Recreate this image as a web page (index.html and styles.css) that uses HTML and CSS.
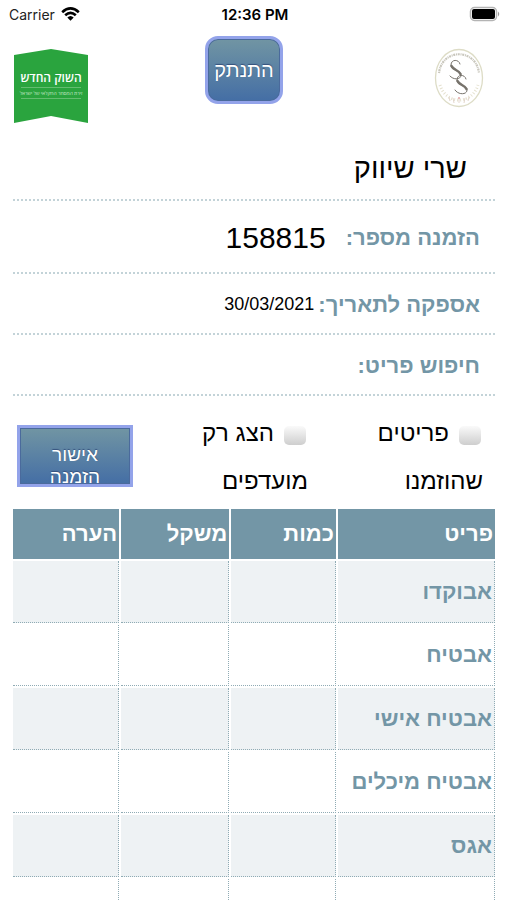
FILE: index.html
```html
<!DOCTYPE html>
<html lang="he" dir="rtl">
<head>
<meta charset="utf-8">
<meta name="viewport" content="width=device-width, initial-scale=1">
<title>הזמנה 158815</title>
<link rel="stylesheet" href="styles.css">
</head>
<body>
<div class="status" dir="ltr">
  <div class="carrier"><span>Carrier</span>
    <svg width="19" height="14" viewBox="0 0 19 14" aria-hidden="true"><g fill="none" stroke="#000" stroke-width="2.6"><path d="M1.2 5.2Q9.500-2.400 17.800 5.200"/><path d="M4.200 8.300Q9.500 3.300 14.800 8.300"/></g><path d="M6.300 10.500Q9.500 7.500 12.700 10.500L9.500 13.800Z"/></svg>
  </div>
  <time class="clock">12:36 PM</time>
  <div class="battery"><svg width="32" height="16" viewBox="0 0 32 16" aria-hidden="true"><rect x="1.500" y="1.500" width="26" height="13" rx="4" fill="#fff" stroke="#b4b4b4" stroke-width="1.500"/><rect x="3" y="3" width="23" height="10" rx="2"/><path d="M29 5.500Q31.500 8 29 10.500Z" fill="#999"/></svg></div>
</div>
<header class="header">
  <svg class="seal" width="50" height="60" viewBox="0 0 50 60" role="img" aria-label="SS">
    <ellipse cx="25" cy="30" rx="23.500" ry="28.500" fill="none" stroke="#dddcc6" stroke-width="1.300"/>
    <path d="M5 25C8 0 42 0 45 25" fill="none" stroke="#c9c7bd" stroke-width="2.200" stroke-dasharray="1 .7 2 .8"/>
    <path d="M6 37C12 57 38 57 44 37" fill="none" stroke="#e5e1cf" stroke-width="3" stroke-dasharray="1 2"/>
    <path d="M15 49l1 4M19 50l1 5M25 50v5M31 50l-1 5M35 49l-1 4" stroke="#e3d6cc" stroke-width="1"/>
    <circle cx="25" cy="50" r="1" fill="#e3a8a8"/>
    <g fill="none" stroke="#77736c" stroke-linecap="round">
      <path d="M26 16C25 11 17 11 17 17C17 23 27 22 27 27C27 32 19 32 16 28" stroke-width="1"/>
      <path d="M17.500 18C19 22 25 22 26.500 26" stroke-width="2.500"/>
      <path d="M32 31C31 26 23 26 23 32C23 38 33 37 33 42C33 47 24 47 21 42" stroke-width="1"/>
      <path d="M23.500 33C25 37 31 37 32.500 41" stroke-width="2.500"/>
    </g>
  </svg>
  <button class="logout" type="button">התנתק</button>
  <svg class="market" width="74" height="74" viewBox="0 0 74 74" role="img" aria-label="השוק החדש">
    <path d="M0 6L37 0L74 6V74L37 67L0 74Z" fill="#2aa43e"/>
    <text class="market-name" x="37" y="33">השוק החדש</text>
    <path d="M7 38.500H67M7 49.500H67" stroke="#73c47e" stroke-width=".8"/>
    <text class="market-tag" x="37" y="46">זירת המסחר החקלאי של ישראל</text>
  </svg>
</header>
<main>
  <section class="details">
    <h1 class="customer">שרי שיווק</h1>
    <div class="line order"><span class="label">הזמנה מספר:</span><span class="number">158815</span></div>
    <div class="line"><span class="label">אספקה לתאריך:</span><span class="date">30/03/2021</span></div>
    <div class="line"><label class="label" for="search">חיפוש פריט:</label><input class="search" id="search" type="text"></div>
  </section>
  <div class="filters">
    <label class="filter"><input type="checkbox">פריטים שהוזמנו</label>
    <label class="filter"><input type="checkbox">הצג רק מועדפים</label>
    <button class="confirm" type="button"><span>אישור הזמנה</span></button>
  </div>
  <table class="items">
    <colgroup><col class="item"><col class="amount"><col class="weight"><col class="note"></colgroup>
    <thead><tr><th>פריט</th><th>כמות</th><th>משקל</th><th>הערה</th></tr></thead>
    <tbody>
      <tr><td>אבוקדו</td><td></td><td></td><td></td></tr>
      <tr><td>אבטיח</td><td></td><td></td><td></td></tr>
      <tr><td>אבטיח אישי</td><td></td><td></td><td></td></tr>
      <tr><td>אבטיח מיכלים</td><td></td><td></td><td></td></tr>
      <tr><td>אגס</td><td></td><td></td><td></td></tr>
      <tr><td></td><td></td><td></td><td></td></tr>
    </tbody>
  </table>
</main>
</body>
</html>
```
FILE: styles.css
```css
* { box-sizing: border-box; }
body {
  margin: 0;
  height: 100vh;
  overflow: hidden;
  background: #fff;
  color: #000;
  font-family: "Liberation Sans", sans-serif;
}
button, input { font: inherit; }

.status {
  display: grid;
  grid-template-columns: 1fr auto 1fr;
  align-items: center;
  height: 28px;
  padding: 0 6px 0 9px;
  font-family: Inter, sans-serif;
  font-size: 14px;
}
.carrier { display: flex; align-items: center; gap: 6px; color: #222; }
.clock { font-size: 15px; font-weight: 600; }
.battery { display: flex; justify-content: flex-end; }

.header {
  display: grid;
  grid-template-columns: 20fr auto 19fr;
  align-items: start;
  height: 108px;
  padding: 8px 23px 0 14px;
}
.seal { margin-top: 12px; }
.market { margin-top: 13px; justify-self: end; }
.market-name { font: 600 12px "Open Sans", sans-serif; fill: #fff; text-anchor: middle; }
.market-tag { font: 5px "Open Sans", sans-serif; fill: #c8e9cc; text-anchor: middle; }

.logout, .confirm {
  border: 3px solid #93a3ea;
  background: linear-gradient(#7195a3, #446ea5);
  box-shadow: inset 0 0 0 1px #4a6a9c;
  color: #fff;
  text-shadow: 0 -1px 1px #34507c;
}
.logout { width: 78px; height: 68px; padding: 0; border-radius: 13px; font-size: 20px; }

.details { padding: 0 12px 0 13px; }
.customer {
  margin: 0;
  height: 65px;
  padding: 8px 28px 0;
  border-bottom: 2px dotted #c3d3d8;
  font-size: 29px;
  font-weight: 400;
  line-height: 48px;
}
.line {
  display: flex;
  align-items: center;
  height: 61px;
  padding: 2px 15px 0;
  border-bottom: 2px dotted #c3d3d8;
}
.order { height: 73px; gap: 20px; }
.label { color: #7396a6; font-size: 22px; font-weight: 700; white-space: nowrap; }
.number { font-size: 30px; }
.date { margin-right: 4px; font-size: 18px; }
.search { flex: 1; min-width: 0; border: 0; background: transparent; outline: 0; }

.filters {
  display: grid;
  grid-template-columns: 1fr 1fr 116px;
  height: 111px;
  padding: 13px 24px 0 17px;
}
.filter { width: 114px; font-size: 24px; line-height: 48px; }
.filter input {
  appearance: none;
  width: 22px;
  height: 19px;
  margin: 0 2px 0 10px;
  border-radius: 5px;
  background: linear-gradient(#fafafa, #cecece);
  vertical-align: -4px;
}
.confirm {
  height: 62px;
  margin-top: 16px;
  padding: 16px 20px 0;
  overflow: hidden;
  font-size: 19px;
  line-height: 22px;
}
.confirm span { display: block; height: 40px; overflow: hidden; }

.items {
  width: calc(100% - 21px);
  margin: 0 10px 0 11px;
  border-spacing: 2px;
  table-layout: fixed;
  color: #7396a6;
  font-size: 22px;
  font-weight: 700;
}
.item { width: 33%; }
.amount { width: 22%; }
.weight { width: 22.7%; }
.note { width: 22.3%; }
.items th { height: 50px; padding: 0 2px; background: #7396a6; color: #fff; text-align: right; }
.items td {
  height: 62px;
  padding: 0 2px;
  border-right: 1px dotted #8fabb4;
  border-bottom: 1px dotted #8fabb4;
}
.items tr:nth-child(odd) td { background: #eef2f4; }
.items tr:nth-child(even) td { height: 61px; }
```
